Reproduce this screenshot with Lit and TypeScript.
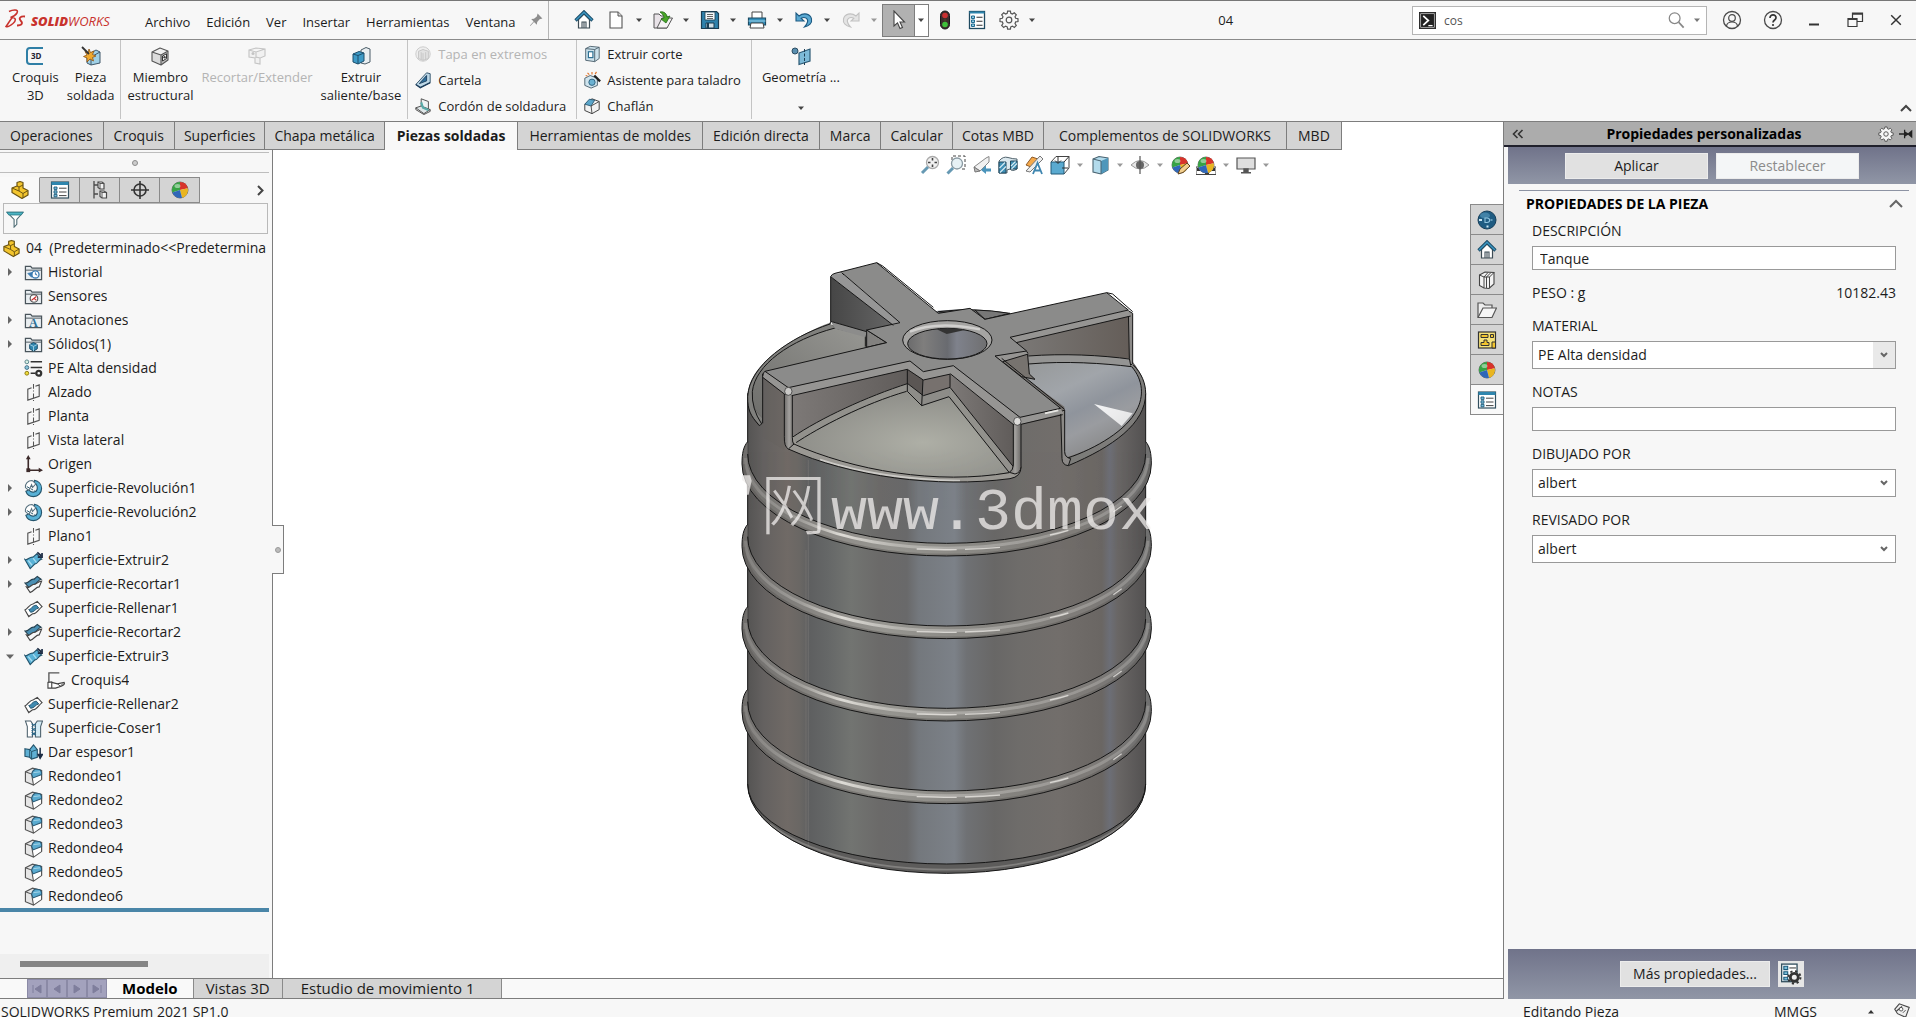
import { LitElement, html, svg, css, nothing, type TemplateResult } from "lit";
import { customElement, state } from "lit/decorators.js";
import { classMap } from "lit/directives/class-map.js";

type Glyph = ReturnType<typeof svg>;

const ball = svg`
  <circle cx="10" cy="10" r="8" fill="#e8e8e8" stroke="#555" stroke-width=".8"/>
  <path d="M10 10 V2 A8 8 0 0 0 2.4 12.5 Z" fill="#37a344"/>
  <path d="M10 10 V2 A8 8 0 0 1 17.8 8.2 Z" fill="#d8332a"/>
  <path d="M10 10 L17.8 8.2 A8 8 0 0 1 12 17.8 Z" fill="#e9b520"/>
  <path d="M10 10 L12 17.8 A8 8 0 0 1 2.4 12.5 Z" fill="#2f67b8"/>
  <ellipse cx="7.5" cy="6" rx="3" ry="2" fill="#fff" opacity=".45"/>`;

const sheetList = svg`
  <rect x="1.5" y="2" width="17" height="16" fill="#fff" stroke="#33505f" stroke-width="1.2"/>
  <rect x="1.5" y="2" width="17" height="3" fill="#2f86ae"/>
  <path d="M4 7h3v2.4H4zM4 10.8h3v2.4H4zM4 14.4h3v2.4H4z" fill="#7cc0dc" stroke="#1c5a7a" stroke-width=".9"/>
  <path d="M9 8.2h7.5M9 12h7.5M9 15.6h7.5" stroke="#444" stroke-width="1"/>`;

const folder = svg`
  <path d="M1.5 17.5 V3.5 H7 L8.5 5.5 H18.5 V17.5 Z" fill="#e9eef1" stroke="#4a555c" stroke-width="1.3"/>
  <path d="M1.5 7.5 H18.5" stroke="#4a555c" stroke-width="1"/>`;

const cube = (a: string, b: string, c: string, line: string): Glyph => svg`
  <path d="M2 6 L10 2 L18 5 L11 9 Z" fill="${a}"/><path d="M2 6 L11 9 V19 L2 15 Z" fill="${b}"/>
  <path d="M11 9 L18 5 V14 L11 19 Z" fill="${c}"/>
  <path d="M2 6 L10 2 L18 5 V14 L11 19 L2 15 Z M2 6 L11 9 L18 5 M11 9 V19" fill="none" stroke="${line}" stroke-width="1.1" stroke-linejoin="round"/>`;

const gearShape = (fill: string, stroke: string): Glyph => svg`
  <path d="M8.6 1.2h2.8l.4 2.2 1.6.7 1.9-1.3 2 2-1.3 1.9.7 1.6 2.3.4v2.8l-2.3.4-.7 1.6 1.3 1.9-2 2-1.9-1.3-1.6.7-.4 2.3H8.6l-.4-2.3-1.6-.7-1.9 1.3-2-2L4 13.5l-.7-1.6-2.3-.4V8.7l2.3-.4L4 6.700 2.700 4.800l2-2 1.900 1.300 1.600-.7z" fill="${fill}" stroke="${stroke}" stroke-width="1.2"/>
  <circle cx="10" cy="10" r="2.800" fill="#f7f7f7" stroke="${stroke}" stroke-width="1.200"/>`;

const partShape = svg`
  <path d="M2 8 L7 6 V2.500 L10 1.500 L13 2.500 V8 L18 10.500 V15 L12 18.500 L2 12.500 Z" fill="#f3c52e" stroke="#6b5412" stroke-width="1.200" stroke-linejoin="round"/>
  <path d="M7 6 L9 7 V11 L13 13.500 L18 10.500 M9 7 L13 5 M13 13.500 V18 M2 8 L9 11" fill="none" stroke="#6b5412" stroke-width="1"/>`;

const planeShape = svg`
  <path d="M8 5 L4 6.500 V18 L16 14 V2 L12 3.500" fill="none" stroke="#555" stroke-width="1.200"/>
  <path d="M10 1 V19" stroke="#555" stroke-width="1.100" stroke-dasharray="5 2 1 2"/>`;

const house = svg`
  <path d="M4.500 9.500 V18 H15.500 V9.500 L10 4 Z" fill="#fff" stroke="#3d4c55" stroke-width="1.200"/>
  <path d="M8 18 V12 H12 V18 M10 12V18" fill="none" stroke="#3d4c55" stroke-width="1.100"/>
  <path d="M1.500 10.500 L10 2 L18.500 10.500" fill="none" stroke="#1c4d68" stroke-width="3.200"/>
  <path d="M2 10 L10 2.200 L18 10" fill="none" stroke="#3b96c2" stroke-width="1.400"/>`;

const surf = svg`
  <path d="M1 9 C3.500 10.500 6 5.500 9.500 6.500 L13.500 3 L18.500 8.500 C15 9 14.500 14 11.500 13.500 L6.500 18.500 Z" fill="#58b1d6" stroke="#24546c" stroke-width="1.200"/>
  <path d="M4.500 10 L8.500 15 M9.500 7.500 L13 12" stroke="#a9dcef" stroke-width="1.300"/>
  <path d="M14 1.500 L18 5 M19 2 V6.500 H14.500" fill="none" stroke="#1c2c44" stroke-width="1.800"/>`;

const G: Record<string, Glyph> = {
  home: house,
  file: svg`<path d="M4 2 H12 L16 6 V18 H4 Z" fill="#fff" stroke="#555" stroke-width="1.100"/><path d="M12 2 V6 H16" fill="#ddd" stroke="#555"/>`,
  open: svg`<path d="M1 18 V4 H6 L8 6 H14 V18 Z" fill="#e9e3e8" stroke="#555"/><path d="M4 18 L9 8 H19.500 L14 18 Z" fill="#f5f2f4" stroke="#555"/><path d="M7 2 C11 1 14 4 14 7 L17 6 L13 13 L8 9 L11 8 C11 5 9 4 7 2 Z" fill="#49a628" stroke="#24691a" stroke-width=".8"/>`,
  save: svg`<path d="M1.500 1.500 H16.500 L18.500 3.500 V18.500 H1.500 Z" fill="#2f81ab" stroke="#1b3d52" stroke-width="1.200"/><path d="M5 2 H15 V10 H5 Z" fill="#f3f7f9" stroke="#1b3d52" stroke-width=".8"/><path d="M7 4.500h6M7 6.500h6M7 8.500h6" stroke="#555" stroke-width=".9"/><path d="M6 13 H14 V18 H6 Z" fill="#cfdfe7" stroke="#1b3d52"/><path d="M8 13 V18" stroke="#1b3d52" stroke-width="2"/>`,
  print: svg`<path d="M5 8 V2 H15 V8" fill="#fff" stroke="#444"/><path d="M1.500 8 H18.500 V15 H1.500 Z" fill="#3591bd" stroke="#1d4a62" stroke-width="1.200"/><path d="M1.500 11H18.500" stroke="#9ed2e8"/><path d="M4 13 H16 L17 18 H3 Z" fill="#fff" stroke="#444"/>`,
  undo: svg`<path d="M2 3 V11 H10 L7.200 8.300 C11 6 14.500 9 13.500 12 C13 14 12 15.500 10.500 17 C15 16 18.500 13 17.500 9 C16.500 4 10 2 5 6 Z" fill="#5aa9d2" stroke="#1d5a82" stroke-width="1.100"/>`,
  redo: svg`<path d="M18 3 V11 H10 L12.800 8.300 C9 6 5.500 9 6.500 12 C7 14 8 15.500 9.500 17 C5 16 1.500 13 2.500 9 C3.500 4 10 2 15 6 Z" fill="#e4e4e4" stroke="#c2c2c2" stroke-width="1.100"/>`,
  cursor: svg`<path d="M6 1 V16 L9.500 12.800 L12 18.500 L14.500 17.400 L12 12 H16.500 Z" fill="#fff" stroke="#444" stroke-width="1.100"/>`,
  traffic: svg`<rect x="5.500" y="1" width="9" height="18" rx="4.500" fill="#3b2c2c" stroke="#1a1a1a"/><circle cx="10" cy="5.500" r="2.800" fill="#c93131"/><circle cx="10" cy="10" r="1.600" fill="#4a3a2a"/><circle cx="10" cy="14.500" r="2.800" fill="#3fbf3a"/>`,
  list: svg`<rect x="2.500" y="1.500" width="15" height="17" fill="#fff" stroke="#1f4a60" stroke-width="1.300"/><path d="M2.500 2.500 H17.500" stroke="#2f86ae" stroke-width="2"/><path d="M4.500 6h3v2.500h-3zM4.500 10h3v2.500h-3zM4.500 14h3v2.500h-3z" fill="#8fcbe2" stroke="#1f6a90"/><path d="M9.500 7.300h6M9.500 11.300h6M9.500 15.300h6" stroke="#333" stroke-width="1.100"/>`,
  gear: gearShape("#f7f7f7", "#555"),
  cmd: svg`<rect x=".5" y=".5" width="19" height="19" fill="#222" stroke="#222"/><rect x="2" y="2" width="16" height="16" fill="none" stroke="#ddd" stroke-width=".8"/><path d="M5 4.500 L11 10 L5 15.500" fill="none" stroke="#fff" stroke-width="2"/><path d="M11 16h5" stroke="#fff" stroke-width="1.500"/>`,
  search: svg`<circle cx="8.500" cy="8" r="6" fill="none" stroke="#888" stroke-width="1.400"/><path d="M13 12.500 L18.500 18.500" stroke="#888" stroke-width="2"/>`,
  user: svg`<circle cx="10" cy="10" r="8.500" fill="none" stroke="#4a4a4a" stroke-width="1.300"/><circle cx="10" cy="8" r="3.300" fill="none" stroke="#4a4a4a" stroke-width="1.200"/><path d="M4.500 16 C5 12.500 8 12 10 12 S15 12.500 15.500 16" fill="none" stroke="#4a4a4a" stroke-width="1.200"/>`,
  help: svg`<circle cx="10" cy="10" r="8.500" fill="none" stroke="#4a4a4a" stroke-width="1.300"/><path d="M7 8 C7 3.800 13.200 4 13 8 C12.900 10 10 10 10 12.500" fill="none" stroke="#333" stroke-width="1.700"/><circle cx="10" cy="15" r="1.100" fill="#333"/>`,
  min: svg`<path d="M5 14.500 H15" stroke="#333" stroke-width="2"/>`,
  restore: svg`<path d="M3 8.500 H12 V16.500 H3 Z M3 9.500H12 M7.500 8 V3 H17.500 V11.500 H12.500 M7.500 4.200H17.500" fill="none" stroke="#3a3a3a" stroke-width="1.200"/>`,
  close: svg`<path d="M4 4 L16 16 M16 4 L4 16" stroke="#333" stroke-width="1.800"/>`,
  pin: svg`<path d="M12 2 L18 8 L14.500 9 L11.500 12.500 L11 16 L7.500 12.500 L3 17.500 L2.500 17 L7 12 L4 8.800 L7.500 8.500 L11 5.500 Z" fill="#8d8d8d"/>`,
  sketch3d: svg`<path d="M18 2 H5 Q2 2 2 5 V15 Q2 18 5 18 H18" fill="none" stroke="#2f7fa6" stroke-width="2"/>`,
  weld: svg`<path d="M6 9 L15 4 L19 6 V17 L10 19 L6 17 Z" fill="#9fd0e6" stroke="#40586a"/><path d="M10 19 V11 L19 6" fill="none" stroke="#40586a"/><path d="M8 3 L9.500 6.500 L13 5 L11.500 8.500 L15 10 L11.500 11.500 L12.500 15 L9 13 L6 16 L6 12 L2.500 10.500 L6 9 L4 5.500 L7 7 Z" fill="#f0a92d" stroke="#8a5216" stroke-width=".8"/><path d="M1 1 L8 8" stroke="#333" stroke-width="1.800"/>`,
  member: svg`${cube("#efefef", "#dcdcdc", "#bdbdbd", "#555")}<path d="M12.500 10 L16.500 7.800 V12.500 L12.500 15 Z" fill="#fff" stroke="#333"/><circle cx="14.500" cy="11.300" r="1.200" fill="#444"/>`,
  trim: svg`<path d="M2 4 L9 2 L18 3 V10 L13 12 V18 L8 17 V12 L2 11 Z M2 4 L9 6 L18 3 M9 6 V12 M13 12 L9 11" fill="#f1f1f1" stroke="#c4c4c4" stroke-width="1.100"/><circle cx="6" cy="7.500" r="1.500" fill="#c4c4c4"/>`,
  boss: svg`<path d="M10 4 L15 1.500 L19 3 V16 L14 18 L10 17Z" fill="#e9eef1" stroke="#4b5d68"/><path d="M2 8 L8 5.500 L13 7 V15 L7 18 L2 16 Z" fill="#3e9ac6" stroke="#1d4f6c"/><path d="M2 8 L7 9.500 L13 7 M7 9.500 V18" fill="none" stroke="#1d4f6c"/>`,
  cap: svg`<circle cx="10" cy="10" r="8" fill="#eee" stroke="#c8c8c8"/><path d="M5 7 L10 5 L16 7 V15 L10 17 L5 15 Z M10 9 V17 M8 8V16M13 8V16" fill="#e2e2e2" stroke="#c4c4c4"/>`,
  gusset: svg`<path d="M2 15 L14 2 L18 3 V13 L7 18.500 Z" fill="#bcd7e6" stroke="#2e4e66"/><path d="M6 14 L14 5 V11 Z" fill="#2f6f9b" stroke="#1d3e5c"/><path d="M2 15 L7 18.500 L18 13" fill="none" stroke="#1d3e5c" stroke-width="1.500"/>`,
  bead: svg`<path d="M8 2 L16 5 V14 L8 11 Z" fill="#eef2f3" stroke="#444"/><path d="M2 12 L8 10 L18 14 L11 18.500 Z" fill="#dfe6e8" stroke="#444"/><path d="M8 6 L10 12 L16 14.500" fill="none" stroke="#58aaa8" stroke-width="2.400"/><path d="M2 12 V14 L11 19.500 L18 16V14" fill="none" stroke="#444"/>`,
  cut: svg`<path d="M3 4 L8 1.500 L18 2.500 V15 L13 18.500 L3 17 Z" fill="#cde2ec" stroke="#4a5e6a"/><path d="M3 4 L13 5 L18 2.500 M13 5 V18.500" fill="none" stroke="#4a5e6a"/><rect x="6" y="7.500" width="5" height="6.500" fill="#fff" stroke="#2c6f92" stroke-width="1.300"/>`,
  hole: svg`<path d="M2 8 L8 5 L16 8 V16 L9 19 L2 16 Z" fill="#cfe4ee" stroke="#4a5e6a"/><circle cx="10" cy="12.500" r="3.500" fill="#6cb2d2" stroke="#2b5e7a"/><path d="M12.500 5 L19 11.500" stroke="#222" stroke-width="2.600"/><path d="M5 2 L7 4 M10 1 V4 M15 1 L13.500 3.500 M3 5 L5 5.500" stroke="#e0732a" stroke-width="1.300"/>`,
  chamfer: svg`<path d="M2 8 L10 2 L18 5 V14 L10 18.500 L2 15 Z" fill="#f2f2f2" stroke="#444" stroke-width="1.100"/><path d="M2 8 L7 2.500 L13 3.500 L9 10 Z" fill="#5ba6ca" stroke="#2c5a74"/><path d="M9 10 L18 5 M9 10 L10 18.500" fill="none" stroke="#444"/>`,
  refgeo: svg`<circle cx="4" cy="5" r="3" fill="#5a8fb0" stroke="#2d4d62"/><path d="M8 7 L19 3 V15 L8 18.500 Z" fill="#7dbad8" stroke="#2d5a75" stroke-width="1.200"/><path d="M13.500 3 V19" stroke="#1d3f55" stroke-dasharray="3 1.500"/>`,
  part: partShape,
  props: sheetList,
  config: svg`<path d="M4 1 V18.500 M4 5 H8 M4 14 H8" fill="none" stroke="#4a4a4a" stroke-width="1.300"/><path d="M8 2 H12 L14 3.500 V9 H10 L8 7.500 Z M10 11 H14 L16.500 12.500 V18 H12 L10 16.500 Z" fill="#f2f2f2" stroke="#4a4a4a" stroke-width="1.200"/><path d="M8 2L10 3.500H14M10 3.500V9M10 11L12 12.500H16.500M12 12.500V18" fill="none" stroke="#4a4a4a" stroke-width=".9"/>`,
  dimx: svg`<circle cx="10" cy="10" r="6" fill="none" stroke="#333" stroke-width="1.600"/><path d="M10 1 V19 M1 10 H19" stroke="#333" stroke-width="1.600"/>`,
  ball,
  funnel: svg`<path d="M1 2.500 H19 L12 10.500 V16 L9 19 V10.500 Z" fill="#fff" stroke="#4c6a72" stroke-width="1.200"/><path d="M1 2.500 H19 L17 5.500 H3Z" fill="#4cb5c4" stroke="#2d7f8c"/>`,
  history: svg`${folder}<circle cx="12" cy="12" r="3.800" fill="#fff" stroke="#3a7ab0" stroke-width="1.400"/><path d="M12 9.800V12L14 13M4 11L8 15L8.500 10Z" fill="#3a7ab0" stroke="#3a7ab0" stroke-width=".8"/>`,
  sensor: svg`${folder}<circle cx="10.500" cy="12" r="4" fill="#fff" stroke="#555" stroke-width="1.200"/><path d="M8 14 L13 10 M10.500 12 L13 14" stroke="#c33" stroke-width="1.200"/>`,
  solids: svg`${folder}<path d="M6 10 L10 8 L14 10 V14.500 L10 17 L6 14.500 Z" fill="#2f86ae" stroke="#174a66"/><path d="M6 10L10 12L14 10M10 12V17" fill="none" stroke="#b6dff0" stroke-width=".8"/>`,
  material: svg`<path d="M7 3H19M7 9H19M7 15H12" stroke="#333" stroke-width="1.600"/><circle cx="3" cy="3" r="2" fill="#d9f0e4" stroke="#55828a"/><circle cx="3" cy="9" r="2" fill="#8cc7dc" stroke="#3d6a84"/><circle cx="3" cy="15" r="2" fill="#f0dc3c" stroke="#8c7a16"/><circle cx="15.500" cy="15" r="2.600" fill="#fff" stroke="#333" stroke-width="2.400"/>`,
  plane: planeShape,
  origin: svg`<path d="M4.500 2 V16 H18" fill="none" stroke="#3c2a2a" stroke-width="1.700"/><path d="M4.500 0 L7 4.500 H2Z M20 16 L15.500 13.500 V18.500Z" fill="#3c2a2a"/><rect x="2.500" y="14" width="4" height="4" fill="#3c2a2a"/>`,
  revolve: svg`<path d="M11 1.500 C15.500 2 18.500 5.500 18.500 10 S15 18.500 10 18.500 C6 18.500 3 16.500 2 13 L5 11.500 C8 15.500 14 14 14 9.500 C14 7 13 5 10.500 4.500 Z" fill="#58b1d6" stroke="#24546c" stroke-width="1.200"/><path d="M1.500 9 C1 5 4 1.500 8.500 1.500 L12.500 5 L9 9 L8 6 L5 12 Z" fill="#fff" stroke="#56707e" stroke-width="1.100"/><path d="M3 8 L13 13.500" stroke="#24546c" stroke-dasharray="3 1.500"/>`,
  extrude: surf,
  cutsurf: svg`<path d="M1 8.500 C5.500 9 6.500 3.500 10.500 4.500 L14 1.500 L18 4.500 C14 5.500 13.500 10.500 9.500 10 L5 13 Z" fill="#4a8fb3" stroke="#24404f" stroke-width="1.200"/><path d="M2.500 12.500 L5 13 L9.500 10 C13 10.500 14 7 18.500 6.500 L16 12.500 C12.500 12.500 11.500 16 6.500 18.500 Z" fill="#f6f8f9" stroke="#444" stroke-width="1.200"/>`,
  fill: svg`<path d="M1 11.500 C5 9 5 6 10 5 L14 2.500 L19 8 C15 11 13 16 9 15.500 L5 18.500 Z" fill="#fff" stroke="#444" stroke-width="1.200"/><path d="M5 11 C8 11 8 7 13 6.500 L15.500 9.500 C12 10 11 14 7 14 Z" fill="#3f8ab0" stroke="#23536e"/>`,
  sketch: svg`<path d="M13 2 H2 V13" fill="none" stroke="#555" stroke-width="1.400"/><path d="M1 12 L5 11.500 V18 H1 Z M5 12 L11 13.500 L18 12 Q19.500 14 15 16 L9 18 H5" fill="#fff" stroke="#444" stroke-width="1.200"/><path d="M11 13.500 L14 16 L17 13" fill="none" stroke="#444"/>`,
  knit: svg`<path d="M1.500 2 H7 L9 5 V19 H3.500 L3.500 8 Z" fill="#fff" stroke="#4a5e6a" stroke-width="1.100"/><path d="M19.500 2 H14 L12 5 V19 H17.500 L17.500 8 Z" fill="#d5ecf5" stroke="#4a5e6a" stroke-width="1.100"/><path d="M8 5L12.500 8M12.500 5L8 8M8 9.500L12.500 12.500M12.500 9.500L8 12.500M8 14L12.500 17M12.500 14L8 17" stroke="#2a6788" stroke-width="1.300"/>`,
  thicken: svg`<path d="M1 6 L6 7 L10 2 L14 7 V15 L8 17 L6 15 L1 14 Z" fill="#5fb0d4" stroke="#24546c" stroke-width="1.200"/><path d="M6 7 V15 M14 7 L8 9 V17 M6 7L8 9" fill="none" stroke="#24546c"/><path d="M17 5 V15 M15 12 L17 16 L19.500 12Z" fill="#1c2c44" stroke="#1c2c44" stroke-width="1.600"/>`,
  fillet: svg`<path d="M1.500 5 L9 1.200 L18.500 3.500 V13 L10 19 L1.500 15.500 Z" fill="#e6e6e6" stroke="#555" stroke-width="1.200"/><path d="M9.500 11 L18 8 V13 L10 18.500 Z" fill="#fff"/><path d="M1.500 5 L8 7.500 L10 19 M18.500 3.500 V13" fill="none" stroke="#555" stroke-width="1.100"/><path d="M8 7.500 Q9 3.500 12 2.200 L17 3 Q19 5 18.500 8 L9.500 11.500 Z" fill="#5aabd0" stroke="#2c5a74" stroke-width="1.100"/><path d="M10 6 L17 5" stroke="#a6d5e8"/>`,
  zoomfit: svg`<circle cx="12.500" cy="7.500" r="6" fill="#f1f1f1" stroke="#aaa" stroke-width="1.300"/><path d="M12.500 3v2.500M12.500 9.500v2.500M8 7.500h2.500M14.500 7.500h2.500" stroke="#444" stroke-width="1.600"/><path d="M8 12 L2 18" stroke="#6699b3" stroke-width="3"/>`,
  zoomarea: svg`<path d="M6 5V1H19V14H15" fill="none" stroke="#444" stroke-dasharray="3 2"/><circle cx="11" cy="8.500" r="5.500" fill="#e6f1f5" stroke="#8a9aa2" stroke-width="1.300"/><path d="M7 13 L1.500 18.500" stroke="#6699b3" stroke-width="3"/>`,
  prevview: svg`<path d="M2 12 L14 3 L17 1.500 V7 L8 16 Z" fill="#f1f1f1" stroke="#888"/><path d="M2 12 L8 16 L3 17Z" fill="#bbb" stroke="#777"/><path d="M9 15 L14 10.500 V13.500 H19 V16.500 H14 V19 Z" fill="#4b94bb"/>`,
  section: svg`<path d="M1 6 Q5 1 10 2.500 T19 4 V14 Q14 17 12 14 L9 15 V18 H1 Z" fill="#dbe8ee" stroke="#51636d"/><path d="M1 7 H8 V18 H1 Z M12.500 6 H19 V14 H12.500Z" fill="#3f8fb5" stroke="#23495e"/><path d="M1.500 13L7 7.500M2 17.500L8 11.500M13 11L17.500 6.500M13.500 14L19 8.500" stroke="#d7ecf5" stroke-width="1.100"/>`,
  dynview: svg`<path d="M2 10 L8 2 L14 4 L7 12 Z" fill="#f6a94a" stroke="#8b5a2a"/><path d="M2 16 L16 1 L19 4 L6 17 Z" fill="#eee" stroke="#777"/><path d="M9 19 L13.500 8 L18 19 M10.500 15.500H16.500" fill="none" stroke="#3f86b0" stroke-width="1.800"/>`,
  orient: svg`<path d="M1 7 L6 1.500 H19 V13 L14 19" fill="#fff" stroke="#444"/><path d="M1 7 H14 V19 H1 Z" fill="#5aaad0" stroke="#235a78"/><path d="M14 7 L19 1.500 M8 1.500V8M5 5.500L8 8.500L11 5.500M12 13H18" fill="none" stroke="#333"/>`,
  display: svg`<path d="M3 4 L9 1.500 L18 3 V15 L11 19 L3 17 Z" fill="#b3dbec" stroke="#4a6472" stroke-width="1.100"/><path d="M11 6 L18 3 V15 L11 19 Z" fill="#4f97bb"/><path d="M3 4 L11 6 V19" fill="none" stroke="#4a6472"/>`,
  eye: svg`<path d="M1 10 Q10 1 19 10 Q10 18 1 10Z" fill="#e6e6e6" stroke="#9a9a9a"/><circle cx="10" cy="10" r="4" fill="#666"/><path d="M10 1V19" stroke="#555" stroke-width="1.200"/>`,
  editapp: svg`${ball}<path d="M8 19 L10 14 L17 8 L20 11 L13 17.500Z" fill="#f3cf8e" stroke="#5f4220"/>`,
  scene: svg`<path d="M0 12H20V19.500H0Z" fill="#fff" stroke="#444"/><path d="M1 13h4v3H1zM9 16h4v3H9zM15 13h4v3h-4z" fill="#333"/>${ball}`,
  monitor: svg`<path d="M1 3 H19 V14 H1 Z" fill="#dedede" stroke="#555" stroke-width="1.200"/><path d="M8 14h4v3H8zM5 17.800h10" fill="#555" stroke="#555" stroke-width="1.400"/>`,
  forum: svg`<circle cx="10" cy="10" r="9" fill="#1f5c82" stroke="#173f5a"/><ellipse cx="8" cy="5.500" rx="5" ry="3" fill="#5fa3c6" opacity=".55"/><path d="M10 8h-2v4.500h2c3.500 0 3.500-4.500 0-4.500z" fill="none" stroke="#8fc3de" stroke-width="1.100"/><path d="M2 10h3M9.500 16.500h2" stroke="#cfe8f4" stroke-width="1.800"/><path d="M13.500 10h2" stroke="#8fc3de" stroke-width="1.300"/>`,
  library: svg`<path d="M2.500 5 L8 2 L17 2.500 V14 L12 18.500 L7 18 L2.500 15.500Z" fill="#f3f3f3" stroke="#444" stroke-width="1.100"/><path d="M2.500 5 L7 7 V18 M7 7 L11 2.500 M7 7 L9.500 7 V18 M9.500 7 L14 2.500 M9.500 7 L12.500 7 V18 M12.500 7 L17 2.500" fill="none" stroke="#444"/>`,
  explorer: svg`<path d="M1 17 V3 H6 L8 5 H15 V8" fill="#eee" stroke="#555" stroke-width="1.200"/><path d="M1 17.500 L6 8 H19.500 L15 17.500 Z" fill="#f5f5f5" stroke="#555" stroke-width="1.200"/>`,
  palette: svg`<rect x="1.500" y="2" width="17" height="16" fill="#f5e27a" stroke="#333" stroke-width="1.200"/><path d="M4 4.500h7v3H4zM13.500 4.500h3v3h-3zM4 15.500v-3h3v-2.500h3v2.500h2v3zM15 18v-6h3.500v6z" fill="#f3c52e" stroke="#333"/>`,
  tag: svg`<path d="M2 8 L7 2 L18 6 L14 17 L5 13Z M4 10L10 5" fill="#eee" stroke="#444" stroke-width="1.200"/><circle cx="9" cy="8" r="2" fill="#fff" stroke="#444"/><path d="M11 12l3-3" stroke="#444"/>`,
  propgear: svg`<rect x="1.500" y="1" width="14" height="16" fill="#fff" stroke="#33505f" stroke-width="1.200"/><path d="M3.500 3h3.500v3H3.500zM3.500 8h3.500v2.500H3.500zM3.500 13h3.500v2.500H3.500z" fill="#7cc0dc" stroke="#1c5a7a"/><path d="M8.500 4.500h6" stroke="#444"/><circle cx="13" cy="13" r="3.600" fill="#eee" stroke="#333" stroke-width="2.600"/><circle cx="13" cy="13" r="5.600" fill="none" stroke="#333" stroke-width="1.800" stroke-dasharray="2 2.400"/>`,
  sidepin: svg`<path d="M0 10 H8 M8 4 V16" stroke="#222" stroke-width="1.800"/><path d="M8 6 L13 9 L19 4 V16 L13 11 L8 14 Z" fill="#222"/>`,
};

const icon = (name: string, size = 20): TemplateResult =>
  html`<svg class="ic" width=${size} height=${size} viewBox="0 0 20 20" aria-hidden="true">${G[name]}</svg>`;

const caret = (color = "#444"): TemplateResult =>
  html`<svg class="ic" width="8" height="5" viewBox="0 0 8 5" aria-hidden="true"><path d="M1 .5h6L4 4z" fill=${color}/></svg>`;

const chevron = (d: string, w = 12, h = 8, color = "#444"): TemplateResult =>
  html`<svg class="ic" width=${w} height=${h} viewBox="0 0 ${w} ${h}" aria-hidden="true"><path d=${d} fill="none" stroke=${color} stroke-width="2"/></svg>`;

const sheet = css`
  * { box-sizing: border-box; }
  button, input, select { font: inherit; color: inherit; margin: 0; padding: 0; border: 0; background: none; border-radius: 0; outline: none; }
  button { white-space: nowrap; cursor: default; }
  .ic { display: block; flex: none; }
`;

interface TankRing { y: number }

@customElement("tank-model")
export class TankModel extends LitElement {
  static styles = css`
    :host { display: block; }
    svg { display: block; width: 450px; height: 650px; }
    .edge { fill: none; stroke: #161616; stroke-width: 3; stroke-linejoin: round; }
    .latin { font: 180px "Liberation Mono", monospace; }
    .han { font: 300 200px "Noto Sans CJK SC", sans-serif; }
    .mark { fill: #f2efee; opacity: 0.75; }
  `;

  private rings: TankRing[] = [{ y: 612 }, { y: 860 }, { y: 1107 }, { y: 1355 }];

  private ring(r: TankRing) {
    const y = r.y;
    return svg`
      <path d="M83 ${y - 37} C70 ${y - 22} 66 ${y - 2} 66 ${y + 30} A614 276 0 0 0 1294 ${y + 30} C1294 ${y - 2} 1290 ${y - 22} 1277 ${y - 37} V${y} A597 268 0 0 1 83 ${y} Z" fill="url(#tube)"/>
      <path d="M72 ${y + 30} A608 273 0 0 0 1288 ${y + 30}" fill="none" stroke="#4f4d4b" stroke-width="7" opacity=".35"/>
      <path d="M76 ${y + 12} A603 270 0 0 0 1284 ${y + 12}" fill="none" stroke="url(#shine)" stroke-width="9"/>
      <path d="M590 ${y + 285} Q680 ${y + 288} 710 ${y + 287} M990 ${y + 243} Q1020 ${y + 237} 1045 ${y + 229} M735 ${y + 286} Q790 ${y + 285} 840 ${y + 280} M1180 ${y + 174} L1205 ${y + 156}" fill="none" stroke="#f3f1ec" stroke-width="4" opacity=".7"/>
      <path class="edge" d="M83 ${y - 37} C70 ${y - 22} 66 ${y - 2} 66 ${y + 30} A614 276 0 0 0 1294 ${y + 30} C1294 ${y - 2} 1290 ${y - 22} 1277 ${y - 37}"/>
      <path class="edge" d="M1277 ${y} A597 268 0 0 1 83 ${y}"/>`;
  }

  render() {
    return html`
      <svg viewBox="0 0 1350 1950" role="img" aria-label="Tanque">
        <defs>
          <linearGradient id="body" gradientUnits="userSpaceOnUse" x1="83" y1="0" x2="1277" y2="0">
            <stop offset="0" stop-color="#555453"/><stop offset=".04" stop-color="#646160"/>
            <stop offset=".1" stop-color="#706a66"/><stop offset=".13" stop-color="#6a6764"/>
            <stop offset=".155" stop-color="#5e5f60"/><stop offset=".2" stop-color="#656767"/>
            <stop offset=".26" stop-color="#727471"/><stop offset=".33" stop-color="#6b6a69"/>
            <stop offset=".4" stop-color="#69696a"/><stop offset=".43" stop-color="#74787d"/>
            <stop offset=".52" stop-color="#7c8188"/><stop offset=".55" stop-color="#6f7174"/>
            <stop offset=".62" stop-color="#686766"/><stop offset=".68" stop-color="#6e6c6a"/>
            <stop offset=".78" stop-color="#726e6b"/><stop offset=".89" stop-color="#6a6663"/>
            <stop offset=".91" stop-color="#6c6e76"/><stop offset=".93" stop-color="#696665"/>
            <stop offset="1" stop-color="#535151"/>
          </linearGradient>
          <linearGradient id="tube" x1="0" y1="0" x2="1" y2="0">
            <stop offset="0" stop-color="#6f6d6b"/><stop offset=".22" stop-color="#8e8c88"/>
            <stop offset=".35" stop-color="#969590"/><stop offset=".7" stop-color="#82807c"/>
            <stop offset=".85" stop-color="#7e7b78"/><stop offset="1" stop-color="#6f6f6f"/>
          </linearGradient>
          <linearGradient id="shine" x1="0" y1="0" x2="1" y2="0">
            <stop offset="0" stop-color="#c9c7c3" stop-opacity=".2"/><stop offset=".14" stop-color="#d6d4cf" stop-opacity=".35"/>
            <stop offset=".24" stop-color="#f1efe9" stop-opacity=".8"/><stop offset=".38" stop-color="#d6d4cf" stop-opacity=".5"/>
            <stop offset=".6" stop-color="#d0cecb" stop-opacity=".4"/><stop offset="1" stop-color="#c9c7c3" stop-opacity=".3"/>
          </linearGradient>
          <radialGradient id="dome" cx=".6" cy=".6" r=".6">
            <stop offset="0" stop-color="#aeafa6"/><stop offset="1" stop-color="#8e8e89"/>
          </radialGradient>
          <linearGradient id="domeL" x1="0" y1="1" x2="1" y2="0">
            <stop offset="0" stop-color="#6e6e6b"/><stop offset="1" stop-color="#979793"/>
          </linearGradient>
          <linearGradient id="domeR" x1="0" y1="0" x2=".7" y2="1">
            <stop offset="0" stop-color="#939595"/><stop offset=".4" stop-color="#a1a5aa"/>
            <stop offset=".6" stop-color="#8f949c"/><stop offset=".75" stop-color="#9a9ca0"/><stop offset="1" stop-color="#858585"/>
          </linearGradient>
          <linearGradient id="wall" x1="0" y1="0" x2="1" y2="0">
            <stop offset="0" stop-color="#7d7977"/><stop offset="1" stop-color="#605c5a"/>
          </linearGradient>
          <linearGradient id="wallR" x1="0" y1="0" x2="1" y2="0">
            <stop offset="0" stop-color="#7c7a78"/><stop offset="1" stop-color="#645d58"/>
          </linearGradient>
          <linearGradient id="dark" x1="0" y1="0" x2="1" y2="0">
            <stop offset="0" stop-color="#464646"/><stop offset="1" stop-color="#686868"/>
          </linearGradient>
          <linearGradient id="post" x1="0" y1="0" x2="1" y2="0">
            <stop offset="0" stop-color="#6d6b69"/><stop offset=".5" stop-color="#a3a19e"/><stop offset="1" stop-color="#6b6967"/>
          </linearGradient>
          <linearGradient id="bore" x1="0" y1="0" x2="1" y2="0">
            <stop offset="0" stop-color="#6b6b6c"/><stop offset=".2" stop-color="#7f7e7d"/>
            <stop offset=".5" stop-color="#696b70"/><stop offset=".62" stop-color="#7f828c"/><stop offset="1" stop-color="#6f6f70"/>
          </linearGradient>
          <linearGradient id="glint" x1="0" y1="0" x2="1" y2=".6">
            <stop offset="0" stop-color="#fff" stop-opacity=".9"/><stop offset="1" stop-color="#fff" stop-opacity=".75"/>
          </linearGradient>
          <clipPath id="skin"><path d="M66 640 L83 500 H1277 L1292 640 V900 H66 Z"/></clipPath>
        </defs>

        <path d="M83 430 C90 345 210 262 330 226 L655 182 Q760 170 870 190 L1238 335 C1265 370 1277 400 1277 430 V1602 A597 268 0 0 1 83 1602 Z" fill="url(#body)"/>
        <path d="M83 1602 A597 240 0 0 0 1277 1602 A597 268 0 0 1 83 1602Z" fill="#5d5c5b"/>
        <path d="M150 1722 A597 254 0 0 0 1210 1722" fill="none" stroke="#a5a4a2" stroke-width="5" opacity=".5"/>
        <path class="edge" d="M83 1602 A597 240 0 0 0 1277 1602"/>
        <path class="edge" d="M83 430 V1602 A597 268 0 0 0 1277 1602 V430"/>
        <path d="M265 630 V1790 M258 900 V1770" stroke="#a09d99" stroke-width="2" opacity=".35"/>
        ${this.rings.map((r) => this.ring(r))}

        <path d="M655 185 Q760 172 870 190 L795 208 Z" fill="#777" stroke="#161616" stroke-width="3"/>

        <path d="M83 440 C88 345 210 262 330 218 L345 236 C210 280 105 345 97 425 Q92 475 127 505 L122 527 C95 500 83 480 83 440Z" fill="#80807d"/>
        <path d="M97 425 C105 345 210 270 345 234 L436 256 L440 292 L160 360 L128 370 V505 Q94 475 97 425Z" fill="url(#domeL)"/>
        <path class="edge" d="M83 440 C88 345 210 262 330 222 M97 425 C105 345 210 270 345 234 L436 256 V290 M97 425 Q94 475 125 522 L118 527 C90 495 83 480 83 440"/>
        <path d="M332 80 V214 L440 245 L535 218 Z" fill="url(#dark)"/>
        <path d="M332 214 L440 245 L436 262 L345 236 Z" fill="#8c8c8b"/>
        <path class="edge" d="M332 80 V214 L440 245 M330 222 L332 214"/>
        <path d="M440 240 L500 278 L440 292 Z" fill="#82817f" stroke="#161616" stroke-width="3"/>

        <path d="M1235 340 C1265 370 1277 400 1277 430 C1277 520 1180 590 1045 647 L1030 630 C1130 590 1225 540 1250 480 C1268 430 1262 390 1232 350Z" fill="#7d7c7a"/>
        <path d="M925 342 C1040 334 1150 340 1235 350 C1270 390 1272 440 1250 480 C1220 540 1130 595 1040 622 L1033 600 V470 L850 335 Z" fill="url(#domeR)"/>
        <path d="M1122 462 L1238 490 L1205 528 Z" fill="url(#glint)"/>
        <path class="edge" d="M1240 345 C1265 370 1277 400 1277 430 C1277 520 1180 590 1045 647 M1235 350 C1270 390 1272 440 1250 480 C1220 540 1130 595 1040 625"/>
        <path d="M870 262 L1225 190 L1235 328 C1140 312 1030 312 925 320 V308 Z" fill="url(#wallR)"/>
        <path d="M925 318 C1030 310 1140 315 1235 328 V350 C1150 340 1040 332 925 342Z" fill="#949493"/>
        <path class="edge" d="M925 318 C1030 310 1140 315 1235 328 M1235 350 C1150 340 1040 332 925 342"/>
        <path d="M1225 182 L1238 190 V340 L1232 346 L1228 325 Z" fill="#8c8a88" stroke="#161616" stroke-width="3"/>
        <path d="M825 318 L922 306 L928 372 L945 388 L905 380 Z" fill="#77736f" stroke="#161616" stroke-width="3"/>

        <path d="M217 580 C280 545 430 462 560 422 L605 467 L690 440 L868 667 C650 705 400 662 217 580Z" fill="url(#dome)"/>
        <path d="M215 430 L565 355 V400 C440 440 300 505 217 562Z" fill="url(#wall)"/>
        <path d="M217 562 C300 505 440 440 565 400 L560 424 C430 462 300 530 222 582Z" fill="#92918c"/>
        <path class="edge" d="M217 562 C300 505 440 440 565 400 M560 424 C430 462 300 530 222 582"/>
        <path d="M690 365 L882 525 V655 L690 412Z" fill="url(#wall)"/>
        <path d="M690 412 L880 650 L868 668 L687 440Z" fill="#92918c"/>
        <path class="edge" d="M690 412 L880 650 M868 668 L687 440"/>
        <path d="M562 345 L610 380 V437 L562 400Z" fill="#5b5654"/>
        <path d="M610 380 L692 360 V412 L610 437Z" fill="#77716e"/>
        <path d="M562 400 L610 437 L605 467 L560 424Z M610 437 L690 412 L687 440 L605 467Z" fill="#8d8c88"/>
        <path class="edge" d="M562 345 V424 L605 467 L687 440 M562 400 L610 437 L690 412 V365 M610 368 L605 467"/>

        <path d="M205 597 Q192 590 193 560 L222 562 Q225 580 240 588 C420 665 660 700 868 668 L882 655 L903 650 Q904 680 870 686 C650 715 390 680 205 597Z" fill="#9a9893"/>
        <path d="M300 629 C420 668 560 690 720 692" fill="none" stroke="#ecebe7" stroke-width="5" opacity=".6"/>
        <path class="edge" d="M205 597 C390 680 650 715 870 686 Q904 680 903 650 M217 580 C400 662 650 705 868 668"/>
        <path d="M128 372 L193 430 L193 600 L128 560Z" fill="#625f5d" opacity=".25"/>
        <path d="M193 432 H217 V562 Q217 580 222 582 L205 597 Q192 590 193 560Z" fill="url(#post)" stroke="#161616" stroke-width="3"/>
        <path d="M880 520 H903 V650 Q902 668 885 672 L868 667 Q880 660 880 645Z" fill="url(#post)" stroke="#161616" stroke-width="3"/>
        <path d="M1022 485 L1034 480 V605 Q1034 622 1052 626 L1045 647 Q1026 645 1026 625Z" fill="#8b8986" stroke="#161616" stroke-width="3"/>
        <path class="edge" d="M128 372 V520"/>

        <path d="M205 413 L570 333 L562 358 L215 437 L193 430 Z M128 380 L135 364 L205 413 L193 432Z M700 347 L900 502 L882 525 L690 372Z M900 502 L1020 474 L1030 490 L903 523Z M570 333 L610 365 L700 347 L692 372 L610 390 L562 358Z M345 70 L332 80 L520 225 L540 218Z M870 262 L1225 180 L1232 198 L888 278Z M825 318 L915 302 L925 312 L848 335Z" fill="#969593"/>
        <path d="M332 80 Q335 72 345 70 L470 38 L655 190 L750 175 L795 208 L1160 128 L1225 180 L870 262 L920 303 L825 318 L1022 475 L900 502 L700 347 L610 365 L570 333 L205 413 L135 364 L500 278 L440 240 L540 218 L370 72 L345 70 Z" fill="#8b8b8a"/>
        <path d="M332 80 L345 70 L370 72 L540 218 L520 226Z" fill="#969696"/>
        <path d="M332 80 Q335 72 345 70 L470 38 L655 190 L750 175 L795 208 L1160 128 L1225 180 L870 262 L920 303 L825 318 L1022 475 L900 502 L700 347 L610 365 L570 333 L205 413 L135 364 L500 278 L440 240 L540 218 L370 72 M332 80 L520 226 M365 68 L372 75" class="edge"/>
        <path class="edge" d="M128 380 Q128 366 135 364 M215 437 L562 358 L610 390 L692 372 L882 525 M903 523 L1028 494 M128 382 L193 432 M888 278 L1232 198 M848 335 L925 312 M1160 128 L1178 132 L1238 185 M470 38 L488 48 L640 172 M845 325 L1034 478 M795 208 L765 180"/>
        <ellipse cx="205" cy="424" rx="11" ry="12" fill="#c9c8c6" stroke="#222" stroke-width="2"/>
        <ellipse cx="892" cy="514" rx="11" ry="12" fill="#dddcda" stroke="#222" stroke-width="2"/>
        <path d="M975 490 L1015 481" stroke="#e8e7e4" stroke-width="5"/>

        <ellipse cx="682" cy="270" rx="134" ry="58" fill="#a5a4a2" stroke="#161616" stroke-width="3"/>
        <path d="M570 245 Q650 212 780 238" fill="none" stroke="#dcdbd9" stroke-width="7" opacity=".8"/>
        <ellipse cx="682" cy="281" rx="119" ry="46" fill="url(#bore)" stroke="#161616" stroke-width="3"/>
        <path d="M650 238 Q690 230 735 240 L680 252Z" fill="#333"/>

        <g class="mark" clip-path="url(#skin)">
          <path d="M66 676 L90 676 L95 692 L86 734 L80 734 L78 700 L66 690Z"/>
          <text class="han" x="120" y="838">网</text>
          <text class="latin" x="333" y="838">www.3dmox</text>
        </g>
      </svg>`;
  }
}

interface Node { label: string; icon: string; arrow?: "closed" | "open"; child?: boolean }

@customElement("feature-tree")
export class FeatureTree extends LitElement {
  static styles = [sheet, css`
    :host { display: flex; flex-direction: column; flex: none; width: 273px; background: #f7f7f7; border-right: 1px solid #7d7d7d; min-height: 0; }
    .grip { margin: 2px 3px 4px 0; height: 21px; flex: none; border: solid #bdbdbd; border-width: 1px 0; display: grid; place-items: center; }
    .dot { width: 6px; height: 6px; border-radius: 50%; border: 1px solid #8c8c8c; background: #ccc; }
    .tabs { display: flex; height: 26px; flex: none; align-items: stretch; }
    .tab { width: 40px; display: grid; place-items: center; background: #d4d4d4; border: 1px solid #8a8a8a; border-left-width: 0; }
    .tab.on { background: #f9f9f9; border-color: transparent #8a8a8a transparent transparent; }
    .more { margin-left: auto; width: 24px; display: grid; place-items: center; }
    .filter { height: 31px; flex: none; margin: 0 4px 0 3px; border: 1px solid #b9b9b9; display: flex; align-items: center; gap: 4px; padding-left: 2px; }
    .filter input { flex: 1; min-width: 0; height: 100%; }
    ul { list-style: none; margin: 2px 0 0; padding: 0; flex: 0 1 auto; overflow: hidden; border-bottom: 4px solid #4a86a8; margin-right: 3px; }
    li { height: 24px; display: flex; align-items: center; }
    .row { display: flex; align-items: center; gap: 5px; height: 24px; line-height: 24px; overflow: hidden; }
    .twist { width: 24px; flex: none; height: 24px; display: grid; place-items: center start; padding-left: 6px; }
    .child { padding-left: 23px; }
    .root { padding-left: 2px; white-space: pre; }
    .fill { flex: 1; }
    .scroll { height: 24px; flex: none; background: #efefef; padding: 7px 20px; margin-right: 3px; }
    .thumb { width: 56%; height: 6px; background: #858585; }
  `];

  private nodes: Node[] = [
    { label: "Historial", icon: "history", arrow: "closed" },
    { label: "Sensores", icon: "sensor" },
    { label: "Anotaciones", icon: "notes", arrow: "closed" },
    { label: "Sólidos(1)", icon: "solids", arrow: "closed" },
    { label: "PE Alta densidad", icon: "material" },
    { label: "Alzado", icon: "plane" },
    { label: "Planta", icon: "plane" },
    { label: "Vista lateral", icon: "plane" },
    { label: "Origen", icon: "origin" },
    { label: "Superficie-Revolución1", icon: "revolve", arrow: "closed" },
    { label: "Superficie-Revolución2", icon: "revolve", arrow: "closed" },
    { label: "Plano1", icon: "plane" },
    { label: "Superficie-Extruir2", icon: "extrude", arrow: "closed" },
    { label: "Superficie-Recortar1", icon: "cutsurf", arrow: "closed" },
    { label: "Superficie-Rellenar1", icon: "fill" },
    { label: "Superficie-Recortar2", icon: "cutsurf", arrow: "closed" },
    { label: "Superficie-Extruir3", icon: "extrude", arrow: "open" },
    { label: "Croquis4", icon: "sketch", child: true },
    { label: "Superficie-Rellenar2", icon: "fill" },
    { label: "Superficie-Coser1", icon: "knit" },
    { label: "Dar espesor1", icon: "thicken" },
    ...[1, 2, 3, 4, 5, 6].map((n) => ({ label: `Redondeo${n}`, icon: "fillet" })),
  ];

  private twist(n: Node) {
    if (!n.arrow) return html`<span class="twist"></span>`;
    const d = n.arrow === "open" ? "M0 2.500h8L4 7z" : "M2 0v8l4-4z";
    return html`<button class="twist" aria-label="Expandir ${n.label}"><svg class="ic" width="8" height="8" viewBox="0 0 8 8"><path d=${d} fill="#666"/></svg></button>`;
  }

  private nodeIcon(name: string) {
    if (name !== "notes") return icon(name, 19);
    return html`<svg class="ic" width="19" height="19" viewBox="0 0 20 20" aria-hidden="true">${folder}
      <text x="10" y="17" text-anchor="middle" font-family="Liberation Serif, serif" font-weight="700" font-size="13" fill="#2b7097">A</text></svg>`;
  }

  render() {
    const tabs = ["part", "props", "config", "dimx", "ball"];
    return html`
      <div class="grip"><span class="dot"></span></div>
      <div class="tabs">
        ${tabs.map((t, i) => html`<button class=${classMap({ tab: true, on: i === 0 })} aria-label=${t}>${icon(t)}</button>`)}
        <button class="more" aria-label="Más">${chevron("M2 2l4.500 4.500L2 11", 9, 13)}</button>
      </div>
      <label class="filter">${icon("funnel", 18)}<input type="text" aria-label="Filtro" /></label>
      <ul>
        <li><button class="row root">${icon("part", 19)}<span>04  (Predeterminado&lt;&lt;Predetermina</span></button></li>
        ${this.nodes.map((n) => html`
          <li class=${n.child ? "child" : nothing}>${this.twist(n)}<button class="row">${this.nodeIcon(n.icon)}${n.label}</button></li>`)}
      </ul>
      <div class="fill"></div>
      <div class="scroll"><div class="thumb"></div></div>`;
  }
}

@customElement("property-panel")
export class PropertyPanel extends LitElement {
  static styles = [sheet, css`
    :host { display: flex; flex-direction: column; flex: none; width: 413px; background: #f7f7f7; border-left: 1px solid #7d7d7d; }
    .head { height: 25px; flex: none; background: #acacac; border-bottom: 2px solid #20202c; display: flex; align-items: center; font-weight: 700; }
    .head button { width: 20px; display: grid; place-items: center; }
    .head h2 { flex: 1; margin: 0; font-size: inherit; text-align: center; color: #000; }
    .head .first { width: 28px; }
    .bar { flex: none; margin-left: 4px; background: linear-gradient(#70738a, #9096a6); display: flex; justify-content: center; align-items: center; gap: 8px; }
    .top { height: 37px; }
    .bottom { height: 50px; }
    .act { width: 143px; height: 26px; background: #e1e1e1; border: 1px solid #ececec; }
    .act:disabled { background: #f4f6f7; color: #8b8b8b; }
    .wide { width: 150px; }
    .sq { width: 26px; height: 26px; background: #e6e6e6; display: grid; place-items: center; }
    .body { flex: 1; margin: 6px 7px 0 15px; border-top: 1px solid #8d93a3; min-height: 0; overflow: hidden; }
    .title { height: 26px; margin-bottom: 4px; padding: 0 6px 0 7px; display: flex; align-items: center; justify-content: space-between; font-weight: 700; font-size: 14px; color: #000; width: 100%; }
    .fields { display: flex; flex-direction: column; gap: 13px; padding: 0 13px; }
    .field { display: flex; flex-direction: column; gap: 5px; line-height: 20px; }
    .line { display: flex; justify-content: space-between; line-height: 20px; }
    input { height: 24px; border: 1px solid #999; background: #fff; padding: 0 7px; }
    .pick { display: grid; }
    .pick > * { grid-area: 1 / 1; }
    select { appearance: none; height: 28px; border: 1px solid #999; background: #fff; padding: 0 5px; }
    .mark { justify-self: end; width: 22px; margin: 1px; display: grid; place-items: center; pointer-events: none; }
    .mark.grey { background: #e9e9e9; }
  `];

  private select(id: string, label: string, value: string, grey = false) {
    return html`<div class="field"><label for=${id}>${label}</label>
      <div class="pick"><select id=${id}><option>${value}</option></select>
        <span class=${classMap({ mark: true, grey })}>${chevron("M1 1l3 3L7 1", 8, 6, "#666")}</span></div></div>`;
  }

  render() {
    return html`
      <div class="head">
        <button class="first" aria-label="Contraer"><svg class="ic" width="12" height="10" viewBox="0 0 12 10"><path d="M5.500 1L1.500 5l4 4M10.500 1L6.500 5l4 4" fill="none" stroke="#333" stroke-width="1.600"/></svg></button>
        <h2>Propiedades personalizadas</h2>
        <button aria-label="Opciones">${icon("gear", 16)}</button>
        <button aria-label="Anclar">${icon("sidepin", 14)}</button>
      </div>
      <div class="bar top"><button class="act">Aplicar</button><button class="act" disabled>Restablecer</button></div>
      <div class="body">
        <button class="title">PROPIEDADES DE LA PIEZA ${chevron("M1 8l6-6 6 6", 14, 10, "#666")}</button>
        <div class="fields">
          <div class="field"><label for="desc">DESCRIPCIÓN</label><input id="desc" type="text" .value=${"Tanque"} /></div>
          <div class="line"><span>PESO : g</span><span>10182.43</span></div>
          ${this.select("mat", "MATERIAL", "PE Alta densidad", true)}
          <div class="field"><label for="notes">NOTAS</label><input id="notes" type="text" /></div>
          ${this.select("drawn", "DIBUJADO POR", "albert")}
          ${this.select("rev", "REVISADO POR", "albert")}
        </div>
      </div>
      <div class="bar bottom"><button class="act wide">Más propiedades...</button><button class="sq" aria-label="Configurar">${icon("propgear", 22)}</button></div>`;
  }
}

@customElement("app-root")
export class AppRoot extends LitElement {
  static styles = [sheet, css`
    :host { display: flex; flex-direction: column; height: 100vh; overflow: hidden; background: #f7f7f7; color: #1c1c1c; font: 14px/20px "Open Sans", "Noto Sans", sans-serif; }
    .title { height: 40px; flex: none; display: flex; align-items: center; border-top: 1px solid #777; border-bottom: 1px solid #8a8a8a; font-size: 13px; }
    .brand { width: 114px; margin: 0 18px 0 5px; flex: none; }
    .menus { display: flex; padding-top: 4px; }
    .menus button { padding: 0 8px; line-height: 24px; }
    .pin { padding: 0 4px; height: 38px; border-right: 1px solid #b5b5b5; margin-right: 19px; }
    .tool { width: 32px; height: 32px; display: grid; place-items: center; }
    .drop { width: 15px; height: 32px; display: grid; place-items: center; }
    .pick { display: flex; width: 47px; border: 1px solid #7d7d7d; background: #fff; height: 33px; }
    .pick .tool { background: #b1b1b1; height: 31px; border-right: 1px solid #7d7d7d; }
    .pick .drop { width: 13px; height: 31px; }
    .doc { flex: 1; text-align: center; }
    .search { width: 295px; height: 29px; border: 1px solid #b5b5b5; background: #fff; display: flex; align-items: center; gap: 8px; padding: 0 5px 0 6px; margin-right: 4px; }
    .search input { flex: 1; min-width: 0; font-size: 12px; color: #555; height: 100%; }
    .win { width: 41px; height: 32px; display: grid; place-items: center; }

    .ribbon { height: 82px; flex: none; display: flex; font-size: 13px; border-bottom: 1px solid #7d7d7d; }
    .group { display: flex; gap: 8px; padding: 0 6px; border-right: 1px solid #c4c4c4; margin-bottom: 2px; align-items: flex-start; }
    .first { padding-left: 12px; }
    .last { border: 0; padding-left: 10px; }
    .big { display: flex; flex-direction: column; align-items: center; padding-top: 6px; line-height: 18px; }
    .big .ic { margin-bottom: 2px; }
    .drop-big { margin-top: 20px; }
    .stack { display: flex; flex-direction: column; padding: 1px 4px 0 0; }
    .stack button { display: flex; align-items: center; gap: 6px; height: 26px; }
    .off { color: #b4b4b4; }
    .fold { margin: auto 4px 9px auto; }
    .threeD { font: 700 8px "Open Sans", sans-serif; fill: #223; }

    .body { flex: 1; min-height: 0; display: flex; }
    .main { flex: 1; min-width: 0; display: flex; flex-direction: column; background: #fff; }
    .cmd { display: flex; height: 28px; flex: none; align-self: flex-start; border-bottom: 1px solid #7d7d7d; background: #d4d4d4; }
    .cmd button { padding: 0 10px; border-right: 1px solid #7d7d7d; }
    .cmd .tight { padding: 0 9px; }
    .cmd .mid { padding: 0 11px; }
    .cmd .wide { padding: 0 15px; }
    .cmd .on { background: #f8f8f8; font-weight: 700; margin-bottom: -1px; padding: 0 12px; }
    .work { flex: 1; min-height: 0; display: flex; position: relative; }
    .view { flex: 1; position: relative; overflow: hidden; background: #fff; }
    .handle { position: absolute; left: 272px; top: 375px; width: 12px; height: 49px; background: #f7f7f7; border: 1px solid #7d7d7d; border-left: 0; display: grid; place-items: center; z-index: 1; }
    .handle span { width: 6px; height: 6px; border-radius: 50%; background: #bbb; border: 1px solid #999; }
    .hud { position: absolute; left: 644px; top: 4px; display: flex; }
    .hud button { width: 26px; height: 22px; display: grid; place-items: center; }
    .hud .drop { width: 14px; }
    tank-model { position: absolute; left: 447px; top: 100px; }
    .pane { position: absolute; right: 0; top: 54px; display: flex; flex-direction: column; border: 1px solid #8a8a8a; border-right: 0; }
    .pane button { width: 32px; height: 30px; display: grid; place-items: center; background: #d4d4d4; border-bottom: 1px solid #8a8a8a; }
    .pane button:last-child { background: #f9f9f9; border-bottom: 0; height: 29px; }

    .sheets { height: 21px; flex: none; display: flex; border: solid #7d7d7d; border-width: 1px 0; background: #f9f9f9; font-size: 15px; line-height: 19px; }
    .nav { display: flex; margin-left: 27px; background: #a3a2bd; }
    .nav button { width: 20px; display: grid; place-items: center; border: 1px solid #8b8aa6; }
    .sheets .tab { border-right: 1px solid #8a8a8a; background: #d4d4d4; padding: 0 12px; }
    .sheets .tab.on { background: #f9f9f9; font-weight: 700; padding: 0 15px; color: #000; }
    .sheets .tab.wide { padding: 0 27px 0 18px; }
    .status { height: 18px; flex: none; display: flex; line-height: 25px; padding-left: 1px; align-items: flex-start; }
    .status .editing { margin-left: auto; width: 251px; }
    .status .units { width: 93px; }
    .status .up { width: 26px; padding-top: 10px; }
    .status .tagw { width: 23px; padding-top: 3px; }
  `];

  @state() private command = "Piezas soldadas";

  private menus = ["Archivo", "Edición", "Ver", "Insertar", "Herramientas", "Ventana"];
  private commands: [string, string][] = [
    ["Operaciones", ""], ["Croquis", ""], ["Superficies", "tight"], ["Chapa metálica", "tight"], ["Piezas soldadas", ""],
    ["Herramientas de moldes", "mid"], ["Edición directa", ""], ["Marca", ""], ["Calcular", "tight"],
    ["Cotas MBD", "tight"], ["Complementos de SOLIDWORKS", "wide"], ["MBD", "mid"],
  ];

  private tool(name: string, drop = false, color?: string) {
    return html`<button class="tool" aria-label=${name}>${icon(name)}</button>${drop
      ? html`<button class="drop" aria-label="${name} opciones">${caret(color)}</button>` : nothing}`;
  }

  private big(name: string, a: string, b = "", off = false) {
    const art = name === "sketch3d"
      ? html`<svg class="ic" width="20" height="20" viewBox="0 0 20 20" aria-hidden="true">${G.sketch3d}<text class="threeD" x="6" y="13">3D</text></svg>`
      : icon(name);
    return html`<button class=${classMap({ big: true, off })}>${art}<span>${a}</span>${b ? html`<span>${b}</span>` : nothing}</button>`;
  }

  private small(name: string, label: string, off = false) {
    return html`<button class=${off ? "off" : nothing}>${icon(name, 18)}${label}</button>`;
  }

  private hud(name: string, drop = false) {
    return html`<button aria-label=${name}>${icon(name)}</button>${drop
      ? html`<button class="drop" aria-label="${name} opciones">${caret("#999")}</button>` : nothing}`;
  }

  render() {
    const navs = ["M5 1v8M13 1v8L7 5z", "M12 1v8L6 5z", "M6 1v8l6-4z", "M5 1v8l6-4zM13 1v8"];
    return html`
      <header class="title">
        <svg class="brand" height="24" viewBox="0 0 114 24" role="img" aria-label="SOLIDWORKS">
          <path d="M4 3.500 C8 1.500 14 1 12 5 C10.500 7.500 7 9 5.500 9.500 C12 9 11 13 8 15.500 C5 18 2 19 1 18.500 C3 16 5 12 7 10" fill="none" stroke="#c8322d" stroke-width="1.500"/>
          <path d="M20 8.500 C15.500 8 13.500 10 15.500 12.500 C18 15 17.500 17.500 12 17.500" fill="none" stroke="#c8322d" stroke-width="1.800"/>
          <text x="26" y="18" font-family="Open Sans, sans-serif" font-size="13" font-style="italic" fill="#c8322d"><tspan font-weight="800">SOLID</tspan><tspan font-weight="400">WORKS</tspan></text>
        </svg>
        <nav class="menus">${this.menus.map((m) => html`<button>${m}</button>`)}</nav>
        <button class="pin" aria-label="Fijar menú">${icon("pin", 16)}</button>
        ${this.tool("home")}${this.tool("file", true)}${this.tool("open", true)}${this.tool("save", true)}
        ${this.tool("print", true)}${this.tool("undo", true)}${this.tool("redo", true, "#999")}
        <div class="pick">${this.tool("cursor", true)}</div>
        ${this.tool("traffic")}${this.tool("list")}${this.tool("gear", true)}
        <div class="doc">04</div>
        <div class="search">${icon("cmd", 17)}<input type="text" aria-label="Buscar comandos" .value=${"cos"} />
          <button aria-label="Buscar">${icon("search", 18)}</button><button aria-label="Opciones de búsqueda">${caret("#777")}</button></div>
        ${["user", "help", "min", "restore", "close"].map((w) => html`<button class="win" aria-label=${w}>${icon(w, w === "close" ? 16 : 20)}</button>`)}
      </header>

      <div class="ribbon">
        <div class="group first">${this.big("sketch3d", "Croquis", "3D")}${this.big("weld", "Pieza", "soldada")}</div>
        <div class="group">${this.big("member", "Miembro", "estructural")}${this.big("trim", "Recortar/Extender", "", true)}${this.big("boss", "Extruir", "saliente/base")}</div>
        <div class="group"><div class="stack">${this.small("cap", "Tapa en extremos", true)}${this.small("gusset", "Cartela")}${this.small("bead", "Cordón de soldadura")}</div></div>
        <div class="group"><div class="stack">${this.small("cut", "Extruir corte")}${this.small("hole", "Asistente para taladro")}${this.small("chamfer", "Chaflán")}</div></div>
        <div class="group last"><button class="big">${icon("refgeo")}<span>Geometría ...</span><span class="drop-big">${caret()}</span></button></div>
        <button class="fold" aria-label="Contraer cinta">${chevron("M1 7l5-5 5 5")}</button>
      </div>

      <div class="body">
        <main class="main">
          <div class="cmd">${this.commands.map(([c, size]) => html`
            <button class=${classMap({ on: c === this.command, [size || "std"]: true })} @click=${() => (this.command = c)}>${c}</button>`)}</div>
          <div class="work">
            <feature-tree></feature-tree>
            <div class="handle"><span></span></div>
            <div class="view">
              <tank-model></tank-model>
              <div class="hud">${this.hud("zoomfit")}${this.hud("zoomarea")}${this.hud("prevview")}${this.hud("section")}${this.hud("dynview")}
                ${this.hud("orient", true)}${this.hud("display", true)}${this.hud("eye", true)}${this.hud("editapp")}${this.hud("scene", true)}${this.hud("monitor", true)}</div>
              <div class="pane">${["forum", "home", "library", "explorer", "palette", "ball", "props"].map((p) => html`<button aria-label=${p}>${icon(p)}</button>`)}</div>
            </div>
          </div>
          <div class="sheets">
            <div class="nav">${navs.map((d, i) => html`<button aria-label="Hoja ${i + 1}"><svg class="ic" width="18" height="10" viewBox="0 0 18 10"><path d=${d} fill="#7f7e9c" stroke="#7f7e9c"/></svg></button>`)}</div>
            <button class="tab on">Modelo</button><button class="tab">Vistas 3D</button><button class="tab wide">Estudio de movimiento 1</button>
          </div>
        </main>
        <property-panel></property-panel>
      </div>

      <footer class="status"><span>SOLIDWORKS Premium 2021 SP1.0</span><span class="editing">Editando Pieza</span><span class="units">MMGS</span>
        <span class="up"><svg class="ic" width="8" height="5" viewBox="0 0 8 5"><path d="M1 4.500h6L4 1z" fill="#333"/></svg></span><span class="tagw">${icon("tag", 18)}</span></footer>`;
  }
}
